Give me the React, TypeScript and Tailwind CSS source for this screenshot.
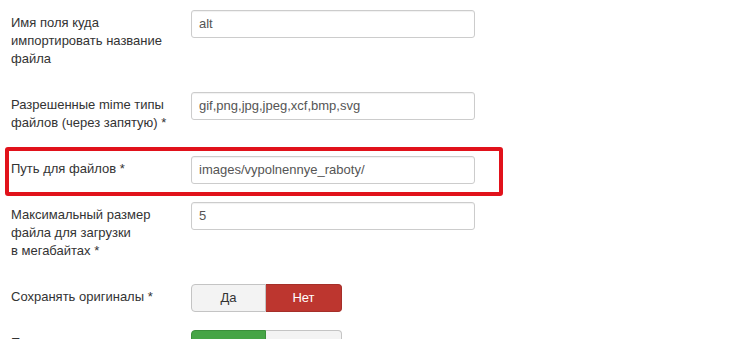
import type { ReactNode } from "react";

type Row = {
  label: ReactNode;
  value?: string;
  toggle?: "no" | "yes";
  marked?: boolean;
};

const ROWS: Row[] = [
  { label: "Имя поля куда импортировать название файла", value: "alt" },
  { label: "Разрешенные mime типы файлов (через запятую) *", value: "gif,png,jpg,jpeg,xcf,bmp,svg" },
  { label: "Путь для файлов *", value: "images/vypolnennye_raboty/", marked: true },
  { label: "Максимальный размер файла для загрузки в\u00a0мегабайтах *", value: "5" },
  { label: "Сохранять оригиналы *", toggle: "no" },
  { label: "Перезаписывать существующие файлы *", toggle: "yes" },
];

function Toggle({ value }: { value: "no" | "yes" }) {
  const yes = value === "yes";
  return (
    <div className="flex h-[28px]">
      <div
        className={
          yes
            ? "w-[75px] flex items-center justify-center pb-[1px] rounded-l-[4px] border border-[#3b8f3b] bg-[#46a546] text-white"
            : "w-[75px] flex items-center justify-center pb-[1px] rounded-l-[4px] border border-[#c4c4c4] bg-[#f3f3f3] text-[#333]"
        }
      >
        Да
      </div>
      <div
        className={
          yes
            ? "w-[76px] flex items-center justify-center pb-[1px] rounded-r-[4px] border border-l-0 border-[#c4c4c4] bg-[#f3f3f3] text-[#333]"
            : "w-[76px] flex items-center justify-center pb-[1px] rounded-r-[4px] border border-l-0 border-[#a52f29] bg-[#bd362f] text-white"
        }
      >
        Нет
      </div>
    </div>
  );
}

export default function App() {
  return (
    <div className="h-[339px] overflow-hidden bg-white text-[13px] leading-[18px] text-[#333] font-['Liberation_Sans',Arial,sans-serif]">
      <div className="pl-[11px] pt-[10px]">
        {ROWS.map((r, i) => (
          <div key={i} className="relative flex mb-[18px]">
            {r.marked && (
              <div className="pointer-events-none absolute left-[-6px] top-[-9px] h-[49px] w-[498px] rounded-[3px] border-[4px] border-[#e1121b]" />
            )}
            <div className="w-[160px] shrink-0 pt-[4px] pb-[6px]">{r.label}</div>
            <div className="ml-[20px]">
              {r.toggle ? (
                <Toggle value={r.toggle} />
              ) : (
                <div className="h-[28px] w-[284px] rounded-[3px] border border-[#cccccc] bg-white px-[7px] pb-[1px] flex items-center text-[#555] shadow-[inset_0_1px_1px_rgba(0,0,0,0.06)]">
                  {r.value}
                </div>
              )}
            </div>
          </div>
        ))}
      </div>
    </div>
  );
}
